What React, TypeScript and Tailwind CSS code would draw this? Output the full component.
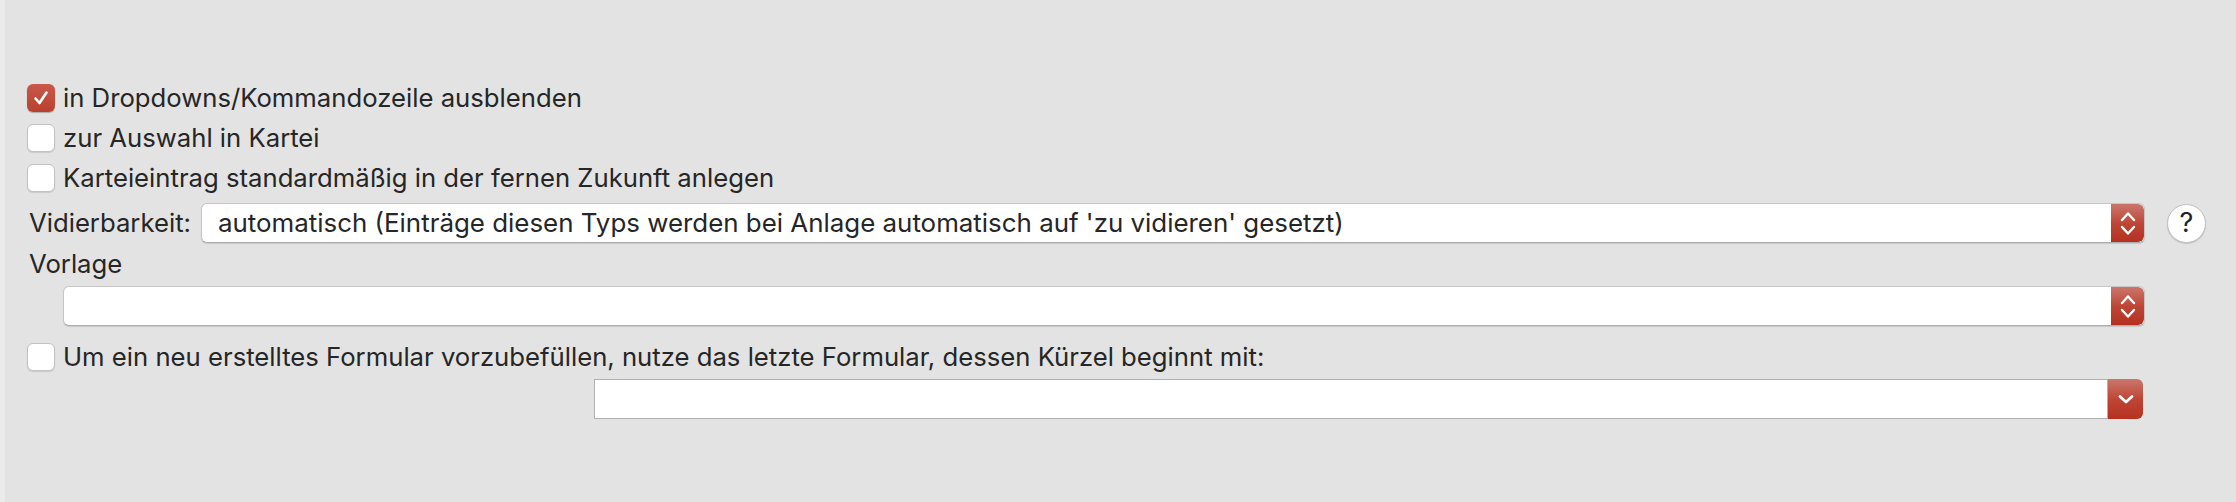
import React from "react"

const font = { fontFamily: "Inter, 'Noto Sans', sans-serif" }

function Checkbox({ checked }: { checked?: boolean }) {
  if (checked) {
    return (
      <div className="flex h-[28px] w-[28px] shrink-0 items-center justify-center rounded-[6px] bg-gradient-to-b from-[#c9584a] to-[#b8402f] shadow-[0_1px_1px_rgba(0,0,0,0.25)]">
        <svg width="18" height="18" viewBox="0 0 18 18" fill="none">
          <path d="M3.5 9.5 L7.5 14 L14.5 3.5" stroke="white" strokeWidth="2.6" strokeLinecap="round" strokeLinejoin="round" />
        </svg>
      </div>
    )
  }
  return (
    <div className="h-[28px] w-[28px] shrink-0 rounded-[6px] border border-[#c2c2c2] bg-white shadow-[0_1px_1px_rgba(0,0,0,0.12)]" />
  )
}

function CheckRow({ label, checked }: { label: string; checked?: boolean }) {
  return (
    <div className="flex h-10 items-center gap-[8px]">
      <Checkbox checked={checked} />
      <span className="text-[25.7px] text-[#262626]">{label}</span>
    </div>
  )
}

function Stepper() {
  return (
    <div className="flex h-full w-[33px] shrink-0 flex-col items-center justify-center gap-[3px] rounded-r-[6px] bg-gradient-to-b from-[#c9766b] via-[#be4636] to-[#b5301f]">
      <svg width="16" height="11" viewBox="0 0 16 11" fill="none">
        <path d="M2 9 L8 2.5 L14 9" stroke="white" strokeWidth="2.4" strokeLinecap="round" strokeLinejoin="round" />
      </svg>
      <svg width="16" height="11" viewBox="0 0 16 11" fill="none">
        <path d="M2 2 L8 8.5 L14 2" stroke="white" strokeWidth="2.4" strokeLinecap="round" strokeLinejoin="round" />
      </svg>
    </div>
  )
}

function Select({ value, className }: { value?: string; className: string }) {
  return (
    <div className={`flex h-[40px] items-stretch overflow-hidden rounded-[6px] border border-[#c6c6c6] border-b-[#acacac] bg-white shadow-[0_1px_1px_rgba(0,0,0,0.12)] ${className}`}>
      <div className="flex flex-1 items-center pl-[16px] text-[25.9px] text-[#262626]">{value}</div>
      <Stepper />
    </div>
  )
}

export default function App() {
  return (
    <div style={font} className="h-[502px] w-full border-l-[5px] border-[#ebebeb] bg-[#e3e3e3]">
      <div className="flex flex-col pl-[22px] pt-[78px]">
        <CheckRow checked label="in Dropdowns/Kommandozeile ausblenden" />
        <CheckRow label="zur Auswahl in Kartei" />
        <CheckRow label="Karteieintrag standardmäßig in der fernen Zukunft anlegen" />

        <div className="mt-[5px] flex h-[40px] items-center">
          <span className="w-[174px] shrink-0 pl-[2px] text-[25.7px] text-[#262626]">Vidierbarkeit:</span>
          <Select
            className="w-[1944px]"
            value="automatisch (Einträge diesen Typs werden bei Anlage automatisch auf 'zu vidieren' gesetzt)"
          />
          <div className="ml-[22px] flex h-[39px] w-[39px] items-center justify-center rounded-full border border-[#c0c0c0] bg-white text-[27px] text-[#222] shadow-[0_1px_1px_rgba(0,0,0,0.15)]">
            ?
          </div>
        </div>

        <div className="flex h-[43px] items-center pl-[2px] text-[25.7px] text-[#262626]">Vorlage</div>
        <div className="pl-[36px]">
          <Select className="w-[2082px]" />
        </div>

        <div className="mt-[11px]">
          <CheckRow label="Um ein neu erstelltes Formular vorzubefüllen, nutze das letzte Formular, dessen Kürzel beginnt mit:" />
        </div>
        <div className="mt-[2px] pl-[567px]">
          <div className="flex h-[40px] w-[1549px] items-stretch">
            <div className="flex-1 border border-[#b0b0b0] bg-white" />
            <div className="flex w-[35px] items-center justify-center rounded-r-[6px] bg-gradient-to-b from-[#c9766b] via-[#be4636] to-[#b5301f]">
              <svg width="18" height="11" viewBox="0 0 18 11" fill="none">
                <path d="M3 2.5 L9 8 L15 2.5" stroke="white" strokeWidth="2.8" strokeLinecap="round" strokeLinejoin="round" />
              </svg>
            </div>
          </div>
        </div>
      </div>
    </div>
  )
}
